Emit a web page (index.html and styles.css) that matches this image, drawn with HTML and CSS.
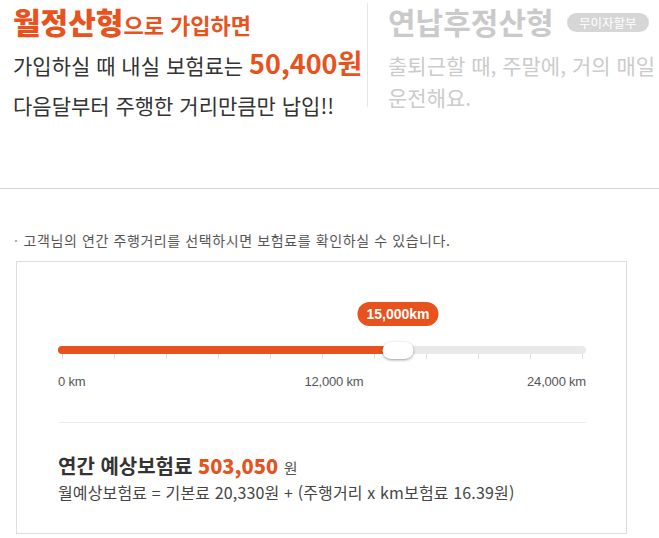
FILE: index.html
```html
<!DOCTYPE html>
<html lang="ko">
<head>
    <meta charset="UTF-8">
    <meta name="viewport" content="width=device-width, initial-scale=1.0">
    <title>주행거리 보험료 계산</title>
    <link rel="stylesheet" href="styles.css">
</head>
<body>
    <section class="plans">
        <div class="plan plan-main">
            <h2 class="plan-title"><strong>월정산형</strong>으로 가입하면</h2>
            <p class="plan-text">가입하실 때 내실 보험료는 <strong class="price">50,400원</strong></p>
            <p class="plan-text">다음달부터 주행한 거리만큼만 납입!!</p>
        </div>
        <div class="plan-sep"></div>
        <div class="plan plan-alt">
            <h2 class="plan-title">연납후정산형 <span class="badge">무이자할부</span></h2>
            <p class="plan-desc">출퇴근할 때, 주말에, 거의 매일<br>운전해요.</p>
        </div>
    </section>

    <hr class="divider">

    <p class="note">고객님의 연간 주행거리를 선택하시면 보험료를 확인하실 수 있습니다.</p>

    <section class="calc-box">
        <div class="bubble-row">
            <span class="bubble" style="left: 64.4%;">15,000km</span>
        </div>
        <div class="slider">
            <div class="track">
                <div class="track-fill" style="width: 64.4%;"></div>
            </div>
            <div class="ticks">
                <i></i><i></i><i></i><i></i><i></i><i></i><i></i><i></i><i></i><i></i><i></i>
            </div>
            <div class="thumb" style="left: 64.4%;"></div>
        </div>
        <div class="scale">
            <span>0 km</span>
            <span class="scale-mid">12,000 km</span>
            <span class="scale-end">24,000 km</span>
        </div>

        <div class="result">
            <p class="result-total">연간 예상보험료 <strong>503,050</strong> <span>원</span></p>
            <p class="result-formula">월예상보험료 = 기본료 20,330원 + (주행거리 x km보험료 16.39원)</p>
        </div>
    </section>
</body>
</html>
```

FILE: styles.css
```css
/* 기본 */
body {
    font-family: "Noto Sans CJK KR", "Noto Sans", sans-serif;
    margin: 0;
    padding: 0;
    color: #333;
    background-color: #fff;
}

p,
h2 {
    margin: 0;
}

/* 상단 상품 안내 */
.plans {
    display: flex;
    align-items: flex-start;
    height: 188px;
}

.plan-main {
    width: 341px;
    padding: 0 13px;
}

.plan-sep {
    width: 1px;
    height: 104px;
    margin-top: 3px;
    background-color: #e6e6e6;
}

.plan-alt {
    padding-left: 20px;
}

.plan-title {
    font-size: 22px;
    line-height: 42px;
    font-weight: bold;
    color: #e8521c;
    white-space: nowrap;
}

.plan-title strong {
    font-size: 30px;
}

.plan-text {
    font-size: 21px;
    line-height: 40px;
    white-space: nowrap;
}

.price {
    font-size: 27px;
    line-height: 1;
    color: #e8521c;
}

.plan-alt .plan-title {
    font-size: 30px;
    color: #cacaca;
}

.badge {
    display: inline-block;
    vertical-align: 6px;
    margin-left: 5px;
    padding: 0 12px;
    height: 19px;
    line-height: 19px;
    border-radius: 10px;
    background-color: #d6d6d6;
    color: #fff;
    font-size: 12.5px;
    font-weight: normal;
}

.plan-desc {
    margin-top: 7px;
    font-size: 21px;
    line-height: 32px;
    color: #cbcbcb;
    white-space: nowrap;
}

.divider {
    margin: 0;
    border: 0;
    border-top: 1px solid #d4d4d4;
}

/* 안내 문구 */
.note {
    margin: 41px 0 0 14px;
    font-size: 14px;
    line-height: 20px;
    letter-spacing: 0.6px;
    color: #555;
}

.note::before {
    content: "·";
    color: #999;
    margin-right: 5px;
}

/* 계산 박스 */
.calc-box {
    margin: 11px 32px 0 16px;
    padding: 40px 40px 31px 41px;
    border: 1px solid #ddd;
}

.bubble-row {
    position: relative;
    height: 24px;
}

.bubble {
    position: absolute;
    top: 0;
    transform: translateX(-50%);
    padding: 0 9px;
    height: 24px;
    line-height: 24px;
    border-radius: 12px;
    background-color: #e8521c;
    color: #fff;
    font-family: "Liberation Sans", Arial, sans-serif;
    font-size: 14px;
    font-weight: bold;
    white-space: nowrap;
}

.slider {
    position: relative;
    height: 17px;
    margin-top: 16px;
}

.track {
    position: absolute;
    left: 0;
    right: 0;
    top: 4px;
    height: 8px;
    border-radius: 4px;
    background-color: #e9e9e9;
    overflow: hidden;
}

.track-fill {
    height: 100%;
    background-color: #e8521c;
}

.ticks {
    position: absolute;
    left: 4px;
    right: 3px;
    top: 12px;
    display: flex;
    justify-content: space-between;
}

.ticks i {
    width: 1px;
    height: 5px;
    background-color: #ddd;
}

.thumb {
    position: absolute;
    top: 0;
    width: 31px;
    height: 17px;
    transform: translateX(-50%);
    border-radius: 9px;
    background-color: #fff;
    box-shadow: 0 1px 3px rgba(0, 0, 0, 0.4);
}

.scale {
    display: grid;
    grid-template-columns: 1fr auto 1fr;
    margin-top: 14px;
    font-family: "Liberation Sans", Arial, sans-serif;
    font-size: 13px;
    line-height: 18px;
    color: #555;
    letter-spacing: -0.2px;
}

.scale-mid {
    margin-left: 24px;
}

.scale-end {
    text-align: right;
}

/* 결과 */
.result {
    margin-top: 31px;
    padding-top: 30px;
    border-top: 1px solid #ececec;
}

.result-total {
    font-size: 20px;
    line-height: 26px;
    font-weight: bold;
    color: #333;
}

.result-total strong {
    color: #e8521c;
}

.result-total span {
    font-size: 15px;
    font-weight: normal;
    color: #555;
}

.result-formula {
    margin-top: 1px;
    font-size: 16px;
    line-height: 20px;
    letter-spacing: 0.15px;
    color: #444;
}
```
